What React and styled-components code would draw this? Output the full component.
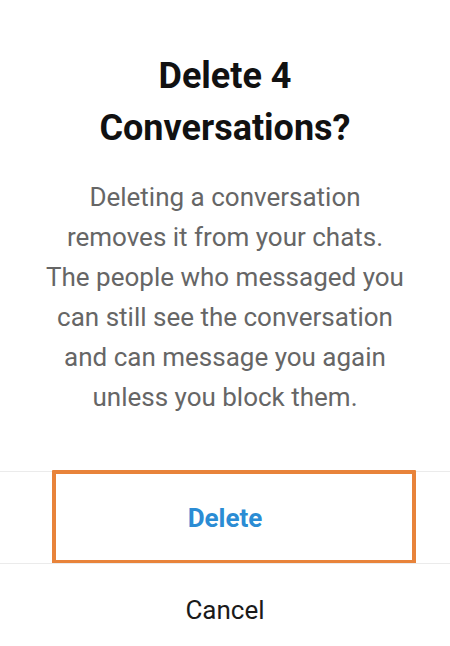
import React from "react";
import styled, { createGlobalStyle } from "styled-components";

const Global = createGlobalStyle`
  html, body { margin: 0; padding: 0; background: #ffffff; }
  body { font-family: Roboto, "Noto Sans", "Liberation Sans", sans-serif; }
  * { box-sizing: border-box; }
`;

const Dialog = styled.div`
  width: 450px;
  height: 646px;
  background: #ffffff;
  display: flex;
  flex-direction: column;
  overflow: hidden;
`;

const Title = styled.h1`
  margin: 50px 0 0;
  padding: 0 40px;
  font-size: 36px;
  line-height: 52px;
  font-weight: 700;
  color: #111111;
  text-align: center;
`;

const Body = styled.p`
  margin: 23px 0 0;
  padding: 0 30px;
  font-size: 26px;
  line-height: 40px;
  font-weight: 400;
  color: #666666;
  text-align: center;
`;

const Actions = styled.div`
  margin-top: 54px;
  display: flex;
  flex-direction: column;
`;

const ActionButton = styled.button`
  position: relative;
  height: 92px;
  border: none;
  border-top: 1px solid #ebebeb;
  background: transparent;
  font-family: inherit;
  font-size: 26px;
  font-weight: ${(p) => (p.$primary ? 700 : 400)};
  color: ${(p) => (p.$primary ? "#2b8cd4" : "#1a1a1a")};
  text-align: center;
  padding: 0;
  cursor: pointer;
`;

const Highlight = styled.span`
  position: absolute;
  left: 52px;
  right: 34px;
  top: -2px;
  bottom: -1px;
  border: 4px solid #e8833a;
  border-radius: 1px;
  pointer-events: none;
`;

export default function App() {
  return (
    <>
      <Global />
      <Dialog>
        <Title>
          Delete 4
          <br />
          Conversations?
        </Title>
        <Body>
          Deleting a conversation
          <br />
          removes it from your chats.
          <br />
          The people who messaged you
          <br />
          can still see the conversation
          <br />
          and can message you again
          <br />
          unless you block them.
        </Body>
        <Actions>
          <ActionButton $primary>
            Delete
            <Highlight />
          </ActionButton>
          <ActionButton>Cancel</ActionButton>
        </Actions>
      </Dialog>
    </>
  );
}
